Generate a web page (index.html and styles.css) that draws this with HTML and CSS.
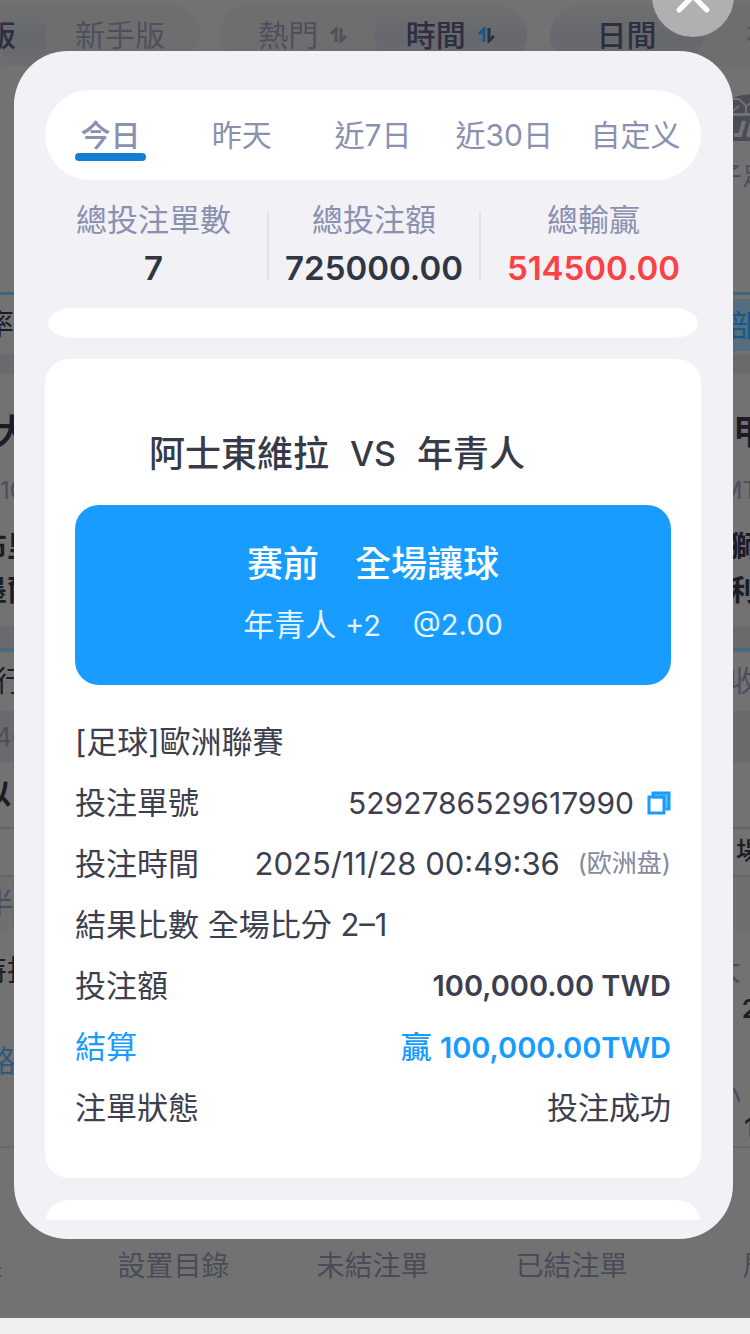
FILE: index.html
```html
<!DOCTYPE html>
<html lang="zh-Hant">
<head>
<meta charset="utf-8">
<meta name="viewport" content="width=device-width, initial-scale=1">
<title>投注記錄</title>
<link rel="stylesheet" href="styles.css">
</head>
<body>
<div class="app">
  <header class="filters">
    <div class="group group-version">
      <button class="pill pill-on pill-cut">版</button>
      <button class="pill">新手版</button>
    </div>
    <div class="group group-sort">
      <button class="pill">熱門
        <svg class="sort" viewBox="0 0 17 16"><path d="M1 7 6 2V15"/><path d="M11 1V14L16 9"/></svg>
      </button>
      <button class="pill pill-on">時間
        <svg class="sort" viewBox="0 0 17 16"><path class="sort-up" d="M1 7 6 2V15"/><path d="M11 1V14L16 9"/></svg>
      </button>
    </div>
    <div class="group group-theme">
      <button class="pill pill-on">日間</button>
      <button class="pill">初</button>
    </div>
  </header>

  <main class="board">
    <div class="row row-logo"><span></span>
      <svg class="logo" viewBox="0 0 48 47"><path d="M1 19V4Q8 0 24 0T45 19Z"/><path class="logo-seam" d="M1 5H7L14 12 24 6M14 12V20M1 17 7 12"/><rect y="22" width="48" height="25"/><path class="logo-seam thick" d="M12 27 8 41H2M16 43 20 28H31M18 35H28"/></svg>
    </div>
    <div class="row row-sub muted"><span></span><span class="out-17">子足</span></div>
    <div class="row row-tabs"><span class="in-15">率</span><span class="tag">部際</span></div>
    <div class="band"></div>
    <div class="row row-league"><span class="in-5">大</span><span class="out-17">甲</span></div>
    <div class="row row-time muted"><span>10</span><span class="out-8">MT</span></div>
    <div class="row row-team"><span class="in-22">布里</span><span class="out-8">獅</span></div>
    <div class="row row-team"><span class="in-22">墨爾</span><span class="out-8">利</span></div>
    <div class="band band-late"></div>
    <div class="row row-market"><span class="in-5">行</span><span class="out-8 muted">收</span></div>
    <div class="row row-shade muted"><span class="in-5">40</span></div>
    <div class="row row-pick"><span class="in-18">以</span></div>
    <div class="row row-play"><span></span><span class="out-12">場</span></div>
    <div class="row row-half muted"><span class="in-15">半</span></div>
    <div class="row row-special"><span class="in-22">特投</span><span class="inset muted">大</span></div>
    <div class="row row-num"><span></span><span class="out-8">2</span></div>
    <div class="row row-road"><span class="in-15">路</span></div>
    <div class="row row-slash muted"><span></span><span class="inset">小</span></div>
    <div class="row row-num row-last"><span></span><span class="out-5">1</span></div>
  </main>

  <nav class="dock">
    <a href="#">賽果</a>
    <a href="#">設置目錄</a>
    <a href="#">未結注單</a>
    <a href="#">已結注單</a>
    <a href="#">周賽</a>
  </nav>
  <div class="home-strip"></div>

  <button class="close" aria-label="關閉">
    <svg viewBox="0 0 32 32"><path d="M3 3 29 29M29 3 3 29"/></svg>
  </button>

  <section class="modal" role="dialog" aria-label="投注記錄">
    <div class="tabs" role="tablist">
      <button class="tab tab-on" role="tab" aria-selected="true">今日</button>
      <button class="tab" role="tab">昨天</button>
      <button class="tab" role="tab">近7日</button>
      <button class="tab" role="tab">近30日</button>
      <button class="tab" role="tab">自定义</button>
    </div>

    <dl class="stats">
      <div class="stat"><dt>總投注單數</dt><dd>7</dd></div>
      <div class="stat"><dt>總投注額</dt><dd>725000.00</dd></div>
      <div class="stat"><dt>總輸贏</dt><dd class="red">514500.00</dd></div>
    </dl>

    <div class="card-prev"></div>

    <article class="card">
      <h2 class="match"><span>阿士東維拉</span><span class="versus">VS</span><span>年青人</span></h2>
      <div class="bet">
        <div class="bet-type"><span>赛前</span><span>全場讓球</span></div>
        <div class="bet-pick"><span>年青人 <span class="odds">+2</span></span><span class="odds">@2.00</span></div>
      </div>
      <div class="details">
        <div class="line"><span>[足球]歐洲聯賽</span></div>
        <div class="line"><span>投注單號</span>
          <span class="value"><span class="num">5292786529617990</span>
            <button class="copy" aria-label="複製"><svg viewBox="0 0 24 24"><path class="copy-mid" d="M5 5H19V19"/><path class="copy-back" d="M6 5V2H22V18H19"/><path class="copy-front" d="M2 6H17V22H2Z"/></svg></button>
          </span>
        </div>
        <div class="line"><span>投注時間</span><span class="value"><span>2025/11/28 00:49:36</span><small class="zone">(欧洲盘)</small></span></div>
        <div class="line"><span>結果比數 全場比分 2–1</span></div>
        <div class="line"><span>投注額</span><span class="amount">100,000.00 TWD</span></div>
        <div class="line blue"><span>結算</span><span class="win">贏 <span class="amount">100,000.00TWD</span></span></div>
        <div class="line"><span>注單狀態</span><span>投注成功</span></div>
      </div>
    </article>

    <div class="card-next"></div>
  </section>
</div>
</body>
</html>
```
FILE: styles.css
```css
* { box-sizing: border-box; }

body {
  margin: 0;
  background: #727272;
  color: #3c404e;
  font-family: Inter, "Noto Sans CJK TC", "Noto Sans CJK SC", sans-serif;
  font-size: 31px;
  line-height: 1;
}

button {
  border: 0;
  padding: 0;
  margin: 0;
  background: none;
  color: inherit;
  font: inherit;
  white-space: nowrap;
}

.app {
  position: relative;
  display: flex;
  flex-direction: column;
  min-height: 100vh;
  overflow: hidden;
}

/* Filter bar */
.filters {
  display: flex;
  height: 66px;
  padding-top: 4px;
}

.group {
  display: grid;
  border-radius: 32px;
  background: #6e6e6e;
  color: #4e505e;
  font-size: 30px;
}

.group-version {
  grid-template-columns: 46px 1fr;
  flex: 0 0 200px;
  margin-right: 20px;
  border-radius: 0 32px 32px 0;
}

.group-sort {
  grid-template-columns: 1fr 1fr;
  flex: 0 0 307px;
  margin-right: 23px;
}

.group-theme {
  grid-template-columns: 153px 80px;
  flex: 1;
}

.pill {
  display: flex;
  align-items: center;
  justify-content: center;
  gap: 12px;
  border-radius: 32px;
}

.group-sort .pill:first-child { padding-left: 12px; }
.group-version .pill:last-child { padding-right: 6px; }

.pill-on {
  background: linear-gradient(#707070, #66686e 55%, #6c6d70);
  color: #2d2e3f;
  font-weight: 500;
}

.pill-cut {
  justify-content: flex-end;
  padding-right: 30px;
}

.group-theme .pill:last-child {
  justify-content: flex-start;
  padding-left: 43px;
}

.sort {
  width: 17px;
  height: 16px;
  fill: none;
  stroke: currentColor;
  stroke-width: 3;
}

.sort-up { stroke: #17578e; }

/* Match board behind the dialog */
.board {
  color: #1b1c26;
  font-size: 29px;
  white-space: nowrap;
}

.muted { color: #4c4e60; }

.row {
  display: flex;
  align-items: center;
  justify-content: space-between;
}

/* How far a label runs past the left or right screen edge */
.in-5 { margin-left: -5px; }
.in-15 { margin-left: -15px; }
.in-18 { margin-left: -18px; }
.in-22 { margin-left: -22px; }
.out-5 { margin-right: -5px; }
.out-8 { margin-right: -8px; }
.out-12 { margin-right: -12px; }
.out-17 { margin-right: -17px; }
.inset { margin-right: 9px; }

.row-logo { height: 86px; align-items: flex-end; padding-bottom: 11px; }
.logo { width: 48px; height: 47px; margin-right: -30px; fill: #4a4c5a; }
.logo-seam { fill: none; stroke: #727272; stroke-width: 2; }
.thick { stroke-width: 4; }

.row-sub { height: 48px; margin-bottom: 92px; font-size: 25px; }
.row-tabs { height: 62px; border-top: 3px solid #3f6379; }
.tag {
  padding: 11px 0 11px 15px;
  margin-right: -39px;
  background: #546e7e;
  color: #17598c;
  font-size: 30px;
}

.band { height: 20px; background: #6b6b6e; }
.band-late { height: 22px; margin-top: 14px; }

.row-league { height: 84px; padding-top: 32px; font-size: 34px; font-weight: 600; }
.row-time { height: 66px; font-size: 24px; }
.row-team { height: 44px; font-weight: 600; }
.row-market { height: 63px; border-top: 4px solid #466c82; }
.row-shade { height: 51px; background: #6a6a6d; font-size: 26px; }
.row-pick { height: 67px; border-bottom: 2px solid #656569; font-weight: 600; }
.row-play { height: 48px; border-bottom: 2px solid #656569; font-size: 26px; font-weight: 500; }
.row-half { height: 53px; background: #6f6f6f; }
.row-special { height: 40px; margin-top: 20px; }
.row-num { height: 38px; font-size: 26px; font-weight: 600; }
.row-road { height: 40px; margin-top: 12px; color: #315a7a; font-size: 31px; }
.row-slash { height: 30px; }
.row-last { margin-bottom: -10px; border-bottom: 2px solid #68686b; }

.dock {
  display: grid;
  grid-template-columns: repeat(5, 1fr);
  flex: 1;
  align-items: end;
  margin: 0 -120px 0 -125px;
  padding-bottom: 38px;
  text-align: center;
}

.dock a {
  color: #4a4b58;
  font-size: 28px;
  text-decoration: none;
}

.home-strip {
  height: 16px;
  background: #efefef;
}

/* Dialog */
.close {
  position: absolute;
  top: -45px;
  right: 16px;
  display: grid;
  place-items: center;
  width: 82px;
  height: 82px;
  border-radius: 50%;
  background: #b0b0b0;
}

.close svg {
  width: 34px;
  height: 34px;
  fill: none;
  stroke: #fff;
  stroke-width: 5;
  stroke-linecap: round;
}

.modal {
  position: absolute;
  top: 51px;
  left: 14px;
  right: 17px;
  padding: 39px 32px 19px 31px;
  border-radius: 54px;
  background: #f1f1f6;
}

.tabs {
  display: grid;
  grid-template-columns: repeat(5, 1fr);
  border-radius: 45px;
  background: #fff;
}

.tab {
  display: flex;
  flex-direction: column;
  align-items: center;
  height: 90px;
  padding-top: 30px;
  color: #8a90b0;
  font-size: 30px;
  line-height: 30px;
}

.tab-on { font-weight: 500; }

.tab-on::after {
  content: "";
  width: 71px;
  height: 8px;
  margin-top: 3px;
  border-radius: 4px;
  background: #147fd2;
}

.stats {
  display: grid;
  grid-template-columns: 15fr 14fr 15fr;
  margin: 31px -5px 27px;
  text-align: center;
}

.stat { height: 70px; }
.stat + .stat { border-left: 2px solid #e3e4ea; }

.stat dt {
  margin-top: -7px;
  color: #8a90b0;
  line-height: 32px;
}

.stat dd {
  margin: 15px 0 0;
  color: #303644;
  font-size: 33px;
  font-weight: 600;
  line-height: 34px;
}

.stat .red { color: #fb4144; }

.card-prev {
  height: 30px;
  margin: 0 3px 21px;
  border-radius: 24px / 15px;
  background: #fff;
}

.card {
  padding: 76px 30px 40px;
  border-radius: 24px;
  background: #fff;
}

.match {
  display: flex;
  justify-content: center;
  gap: 21px;
  margin: 0 0 32px;
  padding-right: 72px;
  color: #373b49;
  font-size: 36px;
  font-weight: 500;
  line-height: 38px;
}

.versus { font-size: 34px; }

.bet {
  display: grid;
  gap: 26px;
  padding: 41px 20px 42px;
  border-radius: 24px;
  background: #189cff;
  color: #fff;
}

.bet-type,
.bet-pick {
  display: flex;
  justify-content: center;
}

.bet-type {
  gap: 36px;
  font-size: 36px;
  font-weight: 500;
  line-height: 36px;
}

.bet-pick {
  gap: 32px;
  color: #e3f3ff;
  line-height: 34px;
}

.odds { font-size: 29px; }
.num { font-size: 30px; }

.details { padding-top: 26px; }

.line {
  display: flex;
  align-items: center;
  justify-content: space-between;
  height: 61px;
  white-space: nowrap;
}

.value {
  display: flex;
  align-items: center;
}

.copy {
  width: 24px;
  height: 24px;
  margin-left: 13px;
}

.copy svg {
  display: block;
  width: 24px;
  height: 24px;
  fill: none;
  stroke: #189cff;
  stroke-width: 3;
}

.copy .copy-mid {
  stroke: #6cc0ff;
  stroke-width: 5;
}

.zone {
  margin-left: 18px;
  color: #8488a0;
  font-size: 25px;
}

.amount {
  font-size: 29px;
  font-weight: 600;
}

.win { font-weight: 500; }
.blue { color: #189cff; }

.card-next {
  height: 20px;
  margin: 22px 1px 0;
  border-radius: 24px 24px 0 0 / 20px 20px 0 0;
  background: #fff;
}
```
